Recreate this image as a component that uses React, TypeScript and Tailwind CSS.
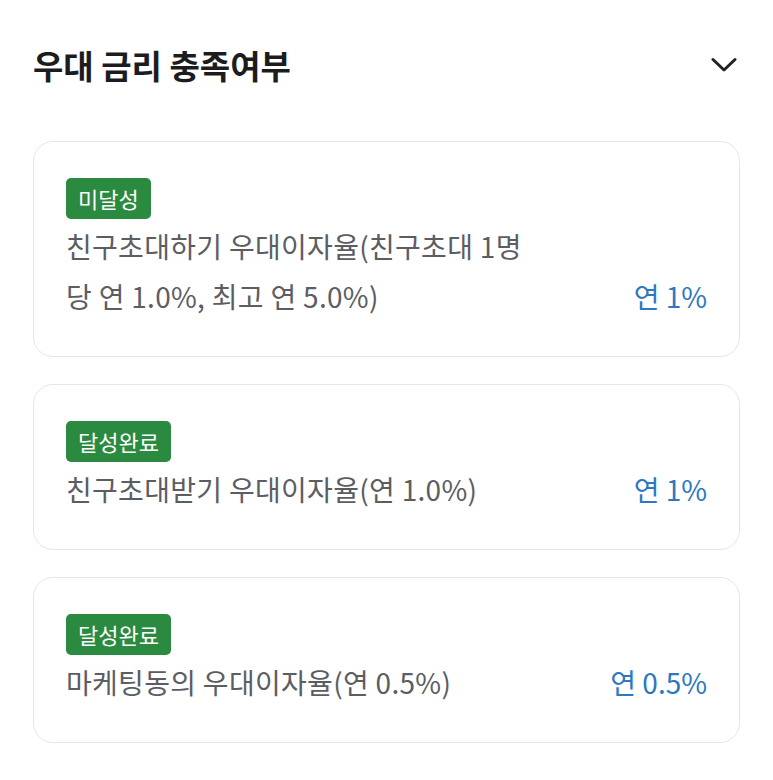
type Item = {
  status: string;
  label: string;
  rate: string;
};

const items: Item[] = [
  {
    status: "미달성",
    label: "친구초대하기 우대이자율(친구초대 1명 당 연 1.0%, 최고 연 5.0%)",
    rate: "연 1%",
  },
  {
    status: "달성완료",
    label: "친구초대받기 우대이자율(연 1.0%)",
    rate: "연 1%",
  },
  {
    status: "달성완료",
    label: "마케팅동의 우대이자율(연 0.5%)",
    rate: "연 0.5%",
  },
];

function RateCard({ item }: { item: Item }) {
  return (
    <div className="rounded-[20px] border border-[#e6e6e8] bg-white px-[32px] pt-[36px] pb-[35px]">
      <span className="inline-flex h-[41px] items-center rounded-[5px] bg-[#2a8a40] px-[12px] text-[22px] text-white">
        {item.status}
      </span>
      <div className="mt-[2px] flex items-end justify-between">
        <p className="w-[478px] text-[28px] leading-[50px] tracking-[0.3px] text-[#5c5d63]">
          {item.label}
        </p>
        <span className="text-[28px] leading-[50px] text-[#2d78c0]">{item.rate}</span>
      </div>
    </div>
  );
}

export default function App() {
  return (
    <main
      className="min-h-screen bg-white px-[33px] pt-[37px]"
      style={{ fontFamily: '"Noto Sans CJK KR", "Noto Sans", sans-serif' }}
    >
      <header className="flex items-center justify-between">
        <h1 className="text-[33px] font-bold leading-[56px] text-[#1c1c1e]">우대 금리 충족여부</h1>
        <svg width="26" height="16" viewBox="0 0 26 16" className="mr-[3px]" fill="none">
          <polyline
            points="2,2.5 13,13 24,2.5"
            stroke="#222"
            strokeWidth="3"
            strokeLinecap="round"
            strokeLinejoin="round"
          />
        </svg>
      </header>

      <section className="mt-[48px] flex flex-col gap-[27px]">
        {items.map((item, i) => (
          <RateCard key={i} item={item} />
        ))}
      </section>
    </main>
  );
}
